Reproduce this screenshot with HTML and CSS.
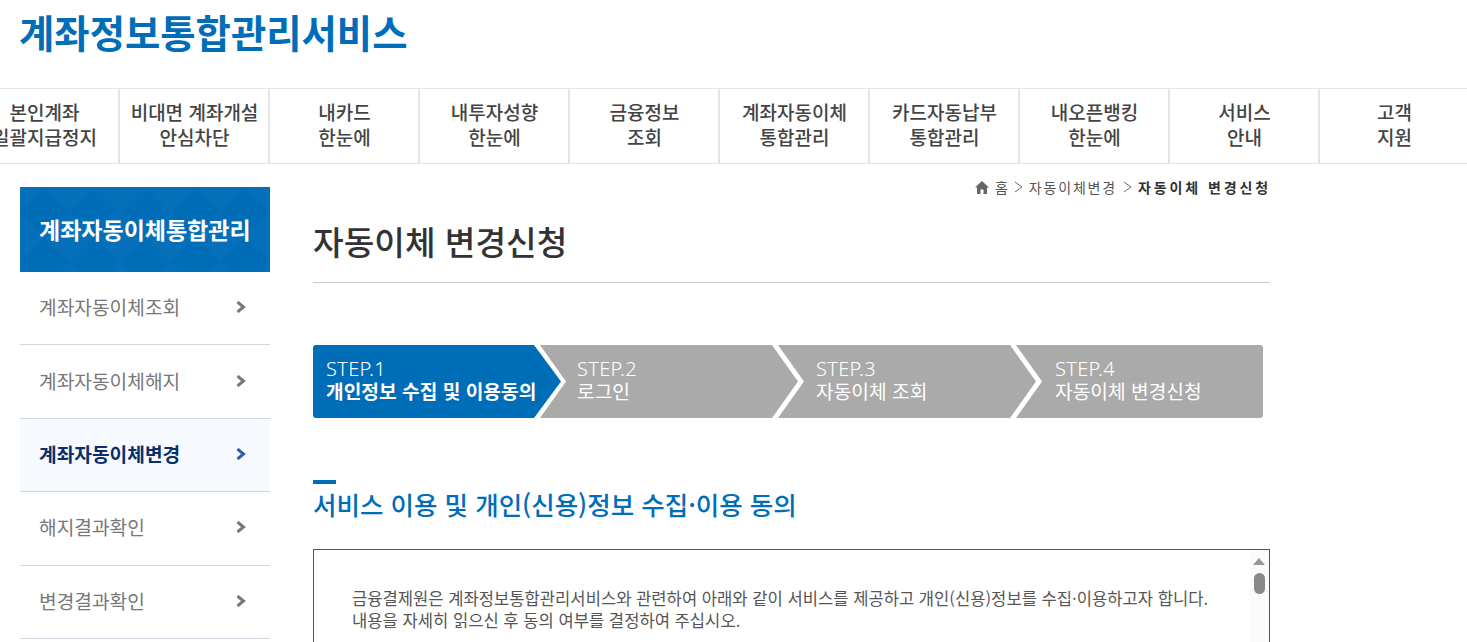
FILE: index.html
```html
<!DOCTYPE html>
<html lang="ko">
<head>
<meta charset="utf-8">
<title>자동이체 변경신청</title>
<link rel="stylesheet" href="styles.css">
</head>
<body>
<header class="top"><h1 class="logo">계좌정보통합관리서비스</h1></header>
<nav class="gnb">
  <a class="gnb-item">본인계좌<br>일괄지급정지</a>
  <a class="gnb-item">비대면 계좌개설<br>안심차단</a>
  <a class="gnb-item">내카드<br>한눈에</a>
  <a class="gnb-item">내투자성향<br>한눈에</a>
  <a class="gnb-item">금융정보<br>조회</a>
  <a class="gnb-item">계좌자동이체<br>통합관리</a>
  <a class="gnb-item">카드자동납부<br>통합관리</a>
  <a class="gnb-item">내오픈뱅킹<br>한눈에</a>
  <a class="gnb-item">서비스<br>안내</a>
  <a class="gnb-item">고객<br>지원</a>
</nav>
<div class="layout">
  <aside class="side">
    <h2 class="side-title">계좌자동이체통합관리</h2>
    <ul class="side-list">
      <li class="side-item">계좌자동이체조회<svg class="chev" viewBox="0 0 10 12"><path d="M1.500 1 7.500 6 1.500 11" /></svg></li>
      <li class="side-item">계좌자동이체해지<svg class="chev" viewBox="0 0 10 12"><path d="M1.500 1 7.500 6 1.500 11" /></svg></li>
      <li class="side-item is-active">계좌자동이체변경<svg class="chev" viewBox="0 0 10 12"><path d="M1.500 1 7.500 6 1.500 11" /></svg></li>
      <li class="side-item">해지결과확인<svg class="chev" viewBox="0 0 10 12"><path d="M1.500 1 7.500 6 1.500 11" /></svg></li>
      <li class="side-item">변경결과확인<svg class="chev" viewBox="0 0 10 12"><path d="M1.500 1 7.500 6 1.500 11" /></svg></li>
    </ul>
  </aside>
  <main class="main">
    <div class="crumb">
      <svg class="home" viewBox="0 0 14 13"><path d="M7 0 14 6.500H12V13H8.500V8.500H5.500V13H2V6.500H0Z"/></svg>
      <span class="crumb-home">홈</span><svg class="crumb-sep" viewBox="0 0 9 12"><path d="M1 1 8 6 1 11"/></svg><span>자동이체변경</span><svg class="crumb-sep" viewBox="0 0 9 12"><path d="M1 1 8 6 1 11"/></svg><strong>자동이체 변경신청</strong>
    </div>
    <h2 class="page-title">자동이체 변경신청</h2>
    <ol class="steps">
      <li class="step step-1 is-on"><span class="step-no">STEP.1</span><b>개인정보 수집 및 이용동의</b></li>
      <li class="step step-2"><span class="step-no">STEP.2</span><span>로그인</span></li>
      <li class="step step-3"><span class="step-no">STEP.3</span><span>자동이체 조회</span></li>
      <li class="step step-4"><span class="step-no">STEP.4</span><span>자동이체 변경신청</span></li>
    </ol>
    <h3 class="section-title">서비스 이용 및 개인(신용)정보 수집·이용 동의</h3>
    <div class="terms">
      <div class="terms-body">
        <p>금융결제원은 계좌정보통합관리서비스와 관련하여 아래와 같이 서비스를 제공하고 개인(신용)정보를 수집·이용하고자 합니다.<br>내용을 자세히 읽으신 후 동의 여부를 결정하여 주십시오.</p>
      </div>
      <div class="scroll"><span class="scroll-up"></span><span class="scroll-thumb"></span></div>
    </div>
  </main>
</div>
</body>
</html>
```
FILE: styles.css
```css
* { box-sizing: border-box; }
html, body { margin: 0; padding: 0; height: 642px; overflow: hidden; background: #fff; }
body { font-family: "Noto Sans CJK KR", "Noto Sans", sans-serif; color: #333; }
h1, h2, h3, p, ul, ol { margin: 0; padding: 0; list-style: none; }

.top { height: 88px; padding: 8px 0 0 19px; }
.logo { font-size: 38.400px; line-height: 46px; font-weight: 700; color: #006db8; letter-spacing: 0; white-space: nowrap; }

.gnb { display: flex; height: 76px; margin-left: -30px; width: 1500px; border-top: 1px solid #e5e5e5; border-bottom: 1px solid #e5e5e5; }
.gnb-item { flex: 0 0 150px; display: flex; align-items: center; justify-content: center; text-align: center; font-size: 19px; line-height: 25px; font-weight: 500; color: #444; border-right: 2px solid #e5e5e5; white-space: nowrap; padding: 0 0 4px 1px; }

.layout { display: flex; padding: 0 0 0 20px; }
.side { flex: 0 0 250px; margin-top: 23px; }
.side-title { height: 85px; display: flex; align-items: center; padding: 0 0 2px 19px; font-size: 23px; font-weight: 700; color: #fff; background-color: #006db8;
  background-image: linear-gradient(45deg, rgba(255,255,255,.02) 25%, transparent 25%, transparent 75%, rgba(255,255,255,.02) 75%), linear-gradient(-45deg, rgba(255,255,255,.02) 25%, transparent 25%, transparent 75%, rgba(255,255,255,.02) 75%);
  background-size: 50px 50px; }
.side-item { height: 73.400px; display: flex; align-items: center; justify-content: space-between; padding: 0 24px 2px 19px; font-size: 19.200px; color: #777; border-bottom: 1px solid #cfd8e0; }
.side-item.is-active { background: #f6faff; color: #0b2f6b; font-weight: 700; }
.chev { width: 10px; height: 12px; fill: none; stroke: #777; stroke-width: 3; }
.is-active .chev { stroke: #2f5ca8; }

.main { flex: 0 0 957px; margin-left: 43px; }
.crumb { display: flex; justify-content: flex-end; align-items: center; gap: 6px; height: 24px; margin-top: 11px; font-size: 14px; color: #555; letter-spacing: 1.800px; }
.crumb strong { color: #333; letter-spacing: 2.900px; margin-right: -1px; }
.crumb-home { letter-spacing: 0; }
.crumb-sep { width: 9px; height: 12px; fill: none; stroke: #666; stroke-width: 1; }
.home { width: 14px; height: 13px; fill: #666; }
.page-title { height: 84px; padding-top: 18px; font-size: 33.300px; line-height: 48px; font-weight: 500; color: #333; border-bottom: 1px solid #ccc; }

.steps { display: flex; width: 950px; height: 73px; margin-top: 62px; border-radius: 3px; overflow: hidden; }
.step { height: 73px; display: flex; flex-direction: column; justify-content: center; background: #aaa; color: #fff; font-size: 19.200px; line-height: 23px; white-space: nowrap; padding-bottom: 4px; }
.step-no { display: block; font-family: "Noto Sans", sans-serif; font-size: 20px; font-weight: 300; letter-spacing: .3px; }
.step b { font-weight: 700; font-size: 19.200px; }
.step-1 { flex: 0 0 248px; padding-left: 13px; background: #006db8; clip-path: polygon(0 0, 221px 0, 248px 50%, 221px 100%, 0 100%); }
.step-2 { flex: 0 0 258px; margin-left: -21px; padding-left: 37px; clip-path: polygon(0 0, 232px 0, 258px 50%, 232px 100%, 0 100%, 26px 50%); }
.step-3 { flex: 0 0 258px; margin-left: -20px; padding-left: 38px; clip-path: polygon(0 0, 232px 0, 258px 50%, 232px 100%, 0 100%, 26px 50%); }
.step-4 { flex: 0 0 247px; margin-left: -20px; padding-left: 39px; clip-path: polygon(0 0, 100% 0, 100% 100%, 0 100%, 26px 50%); }

.section-title { position: relative; margin-top: 62px; height: 69px; padding-top: 6px; font-size: 25.500px; line-height: 36px; font-weight: 500; color: #006db8; }
.section-title::before { content: ""; position: absolute; left: 0; top: 0; width: 23px; height: 4px; background: #006db8; }

.terms { display: flex; height: 200px; border: 1px solid #006db8; }
.terms-body { flex: 1; padding: 37px 0 0 38px; font-size: 16.600px; line-height: 22px; color: #555; white-space: nowrap; }
.scroll { flex: 0 0 19px; position: relative; background: #fafafa; }
.scroll-up { position: absolute; left: 3px; top: 8px; width: 0; height: 0; border-left: 6px solid transparent; border-right: 6px solid transparent; border-bottom: 7px solid #999; }
.scroll-thumb { position: absolute; left: 4px; top: 23px; width: 11px; height: 21px; border-radius: 6px; background: #888; }
```
